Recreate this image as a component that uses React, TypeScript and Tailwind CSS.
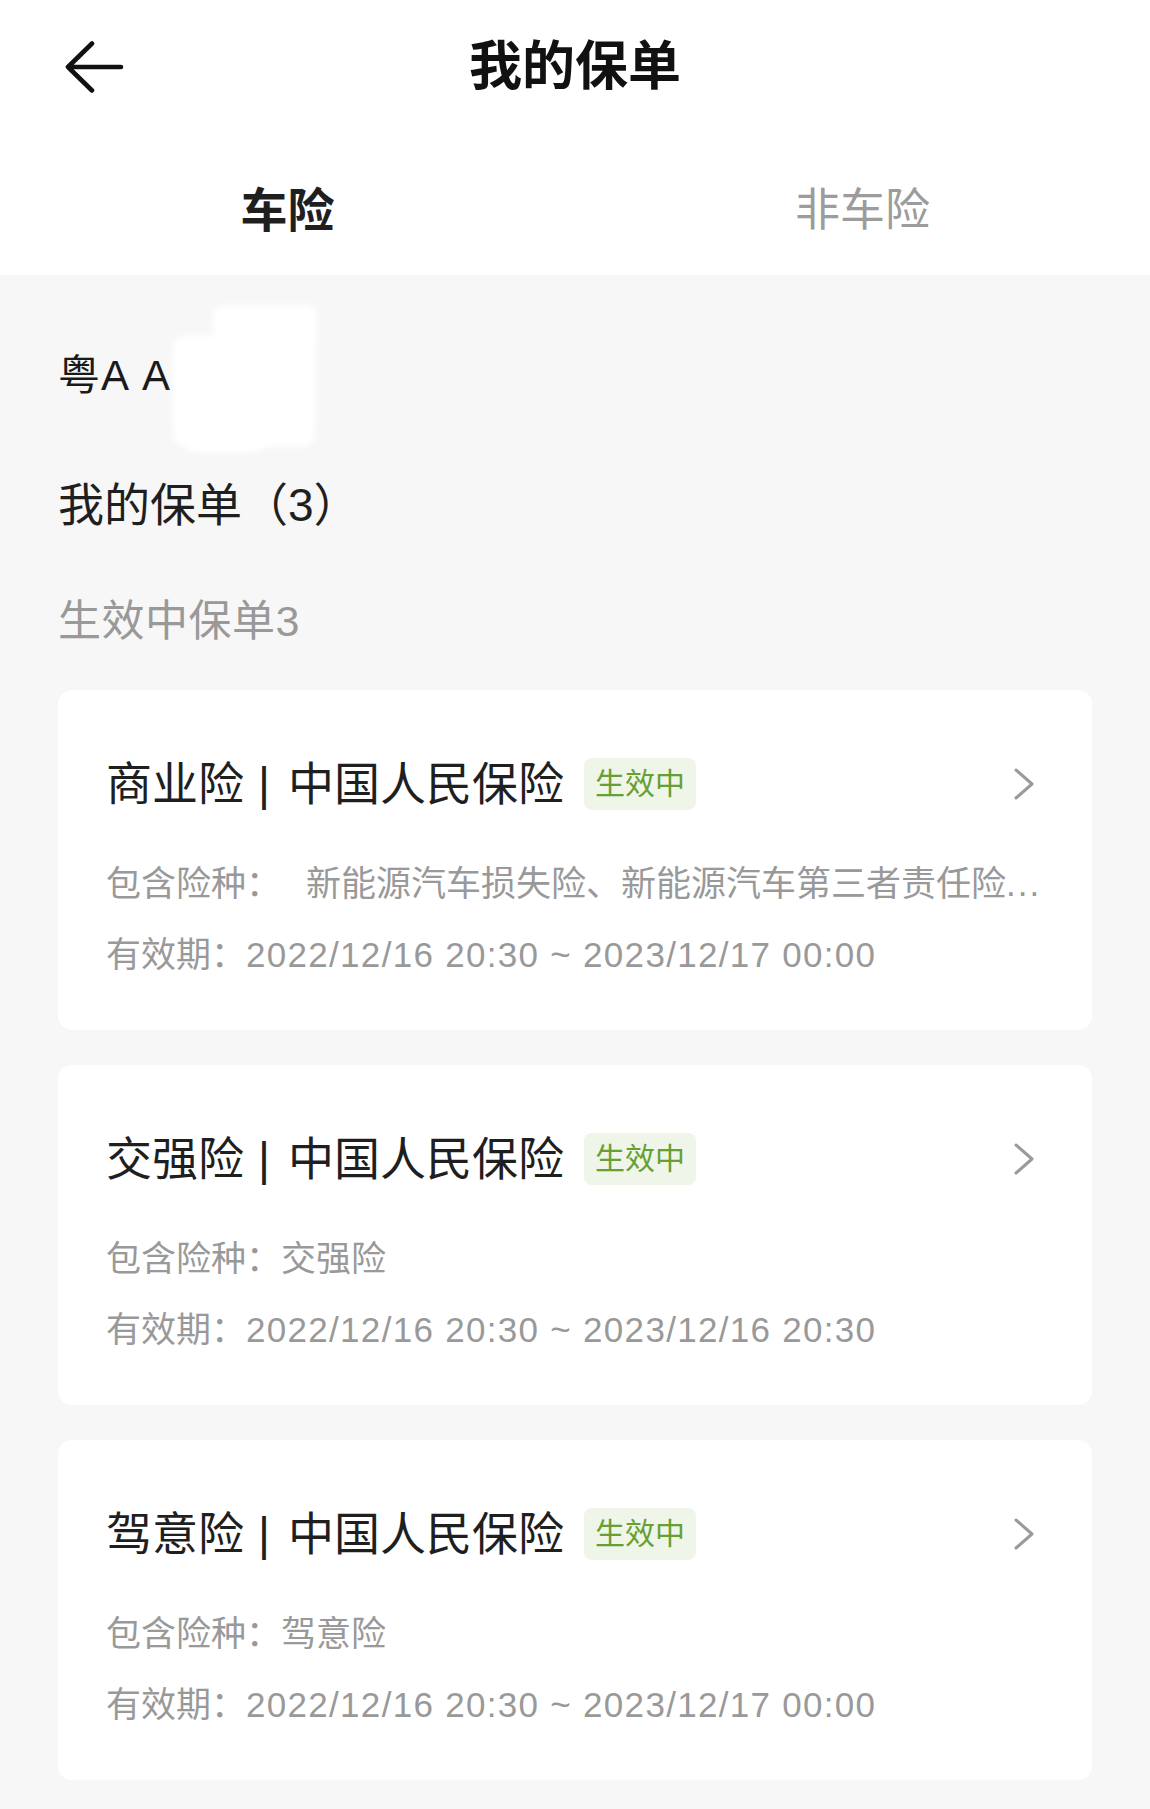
import React from "react";

const FONT = '"Liberation Sans", "Noto Sans CJK SC", sans-serif';

function BackArrow() {
  return (
    <svg width="60" height="54" viewBox="0 0 60 54" fill="none">
      <path
        d="M3 27 L27 3.5 M3 27 L27 50.5 M3 27 H56"
        stroke="#111"
        strokeWidth="4.6"
        strokeLinecap="round"
        strokeLinejoin="round"
      />
    </svg>
  );
}

function Chevron() {
  return (
    <svg width="22" height="34" viewBox="0 0 22 34" fill="none">
      <path
        d="M3 3 L19 17 L3 31"
        stroke="#9a9a9a"
        strokeWidth="3"
        strokeLinecap="round"
        strokeLinejoin="round"
      />
    </svg>
  );
}

type Policy = {
  kind: string;
  types: string;
  period: string;
  indent?: boolean;
  more?: boolean;
};

const policies: Policy[] = [
  {
    kind: "商业险",
    types: "新能源汽车损失险、新能源汽车第三者责任险",
    period: "2022/12/16 20:30 ~ 2023/12/17 00:00",
    indent: true,
    more: true,
  },
  {
    kind: "交强险",
    types: "交强险",
    period: "2022/12/16 20:30 ~ 2023/12/16 20:30",
  },
  {
    kind: "驾意险",
    types: "驾意险",
    period: "2022/12/16 20:30 ~ 2023/12/17 00:00",
  },
];

function PolicyCard({ p }: { p: Policy }) {
  return (
    <div className="bg-white rounded-[14px] pl-[48px] pr-[42px] pt-[64px] pb-[50px]">
      <div className="h-[60px] flex items-center">
        <span className="text-[46px] leading-[60px] text-[#1f1f1f] whitespace-nowrap">
          {p.kind}
          <span className="ml-[14px] mr-[18px]">|</span>
          中国人民保险
        </span>
        <span className="ml-[20px] h-[52px] px-[11px] flex items-center rounded-[8px] bg-[#eff5e8] text-[#67a032] text-[30px] leading-[52px]">
          生效中
        </span>
        <div className="flex-1" />
        <div className="mr-[15px] flex items-center">
          <Chevron />
        </div>
      </div>
      <div className="mt-[45px] h-[50px] flex items-center text-[35px] leading-[50px] text-[#999] min-w-0">
        <span className="shrink-0">包含险种：</span>
        <span
          className={
            "whitespace-nowrap min-w-0 " + (p.indent ? "ml-[25px]" : "")
          }
        >
          {p.types}
          {p.more ? (
            <span className="tracking-[2px]">...</span>
          ) : null}
        </span>
      </div>
      <div className="mt-[21px] h-[50px] flex items-center text-[35px] leading-[50px] text-[#999]">
        <span className="shrink-0">有效期：</span>
        <span className="whitespace-nowrap tracking-[1.3px]">{p.period}</span>
      </div>
    </div>
  );
}

export default function App() {
  return (
    <div
      className="w-[1150px] min-h-[1809px] bg-[#f7f7f7]"
      style={{ fontFamily: FONT }}
    >
      <header className="bg-white h-[275px]">
        <div className="h-[134px] grid grid-cols-[1fr_auto_1fr] items-center">
          <div className="pl-[65px] flex items-center">
            <BackArrow />
          </div>
          <h1 className="text-[53px] leading-[70px] font-bold text-[#111]">
            我的保单
          </h1>
          <div />
        </div>
        <div className="grid grid-cols-2 h-[141px] pt-[12px] items-center text-center">
          <div className="text-[47px] leading-[60px] font-bold text-[#1f1f1f]">
            车险
          </div>
          <div className="text-[45px] leading-[60px] text-[#9c9c9c]">
            非车险
          </div>
        </div>
      </header>

      <main className="px-[58px] pt-[76px] pb-[30px]">
        <div className="relative h-[50px] flex items-center">
          <span className="text-[42px] leading-[50px] text-[#1a1a1a] whitespace-pre tracking-[1px] [word-spacing:4px]">
            粤A A
          </span>
          <div className="absolute left-[115px] top-[-16px] w-[142px] h-[112px] rounded-[14px] bg-white blur-[3px]" />
          <div className="absolute left-[155px] top-[-46px] w-[104px] h-[44px] rounded-[10px] bg-white blur-[3px]" />
          <div className="absolute left-[127px] top-[80px] w-[80px] h-[21px] rounded-[8px] bg-white blur-[3px]" />
        </div>

        <div className="mt-[74px] h-[60px] flex items-center">
          <span className="text-[46px] leading-[60px] text-[#1f1f1f]">
            我的保单（3）
          </span>
        </div>

        <div className="mt-[61px] h-[50px] flex items-center">
          <span className="text-[43px] leading-[50px] text-[#999] tracking-[0.5px]">
            生效中保单3
          </span>
        </div>

        <div className="mt-[44px] flex flex-col gap-[35px]">
          {policies.map((p) => (
            <PolicyCard key={p.kind} p={p} />
          ))}
        </div>
      </main>
    </div>
  );
}
